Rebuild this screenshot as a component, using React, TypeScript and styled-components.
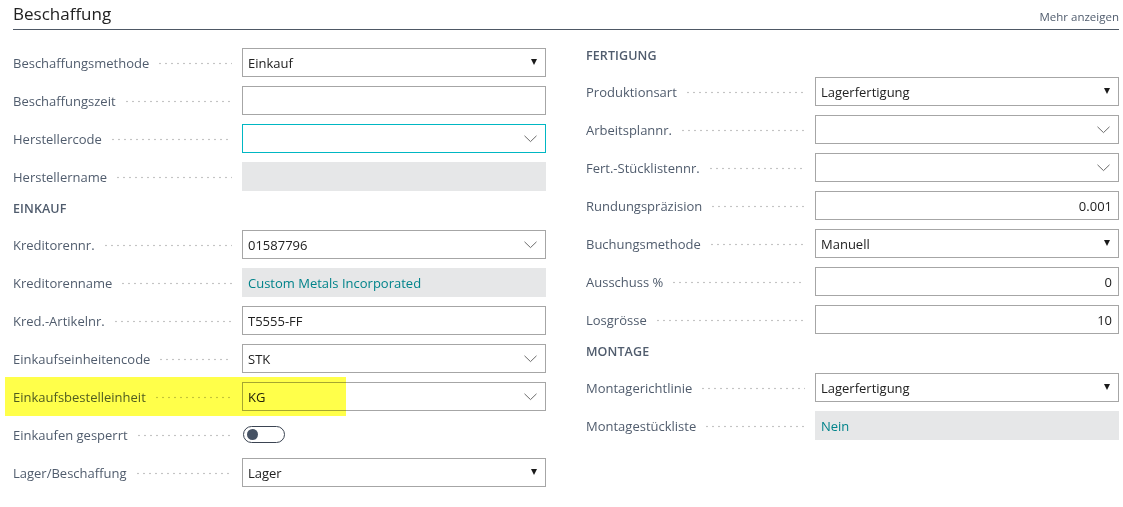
import React from "react";
import styled, { createGlobalStyle, css } from "styled-components";

const GlobalStyle = createGlobalStyle`
  body {
    margin: 0;
    background: #ffffff;
    font-family: "Open Sans", "Noto Sans", Arial, sans-serif;
    -webkit-font-smoothing: antialiased;
  }
`;

type Kind = "select" | "lookup" | "text" | "readonly" | "toggle";

interface FieldDef {
  label: string;
  kind: Kind;
  value?: string;
  align?: "left" | "right";
  focused?: boolean;
  link?: boolean;
  highlight?: boolean;
}

interface Group {
  title?: string;
  fields: FieldDef[];
}

const LEFT: Group[] = [
  {
    fields: [
      { label: "Beschaffungsmethode", kind: "select", value: "Einkauf" },
      { label: "Beschaffungszeit", kind: "text" },
      { label: "Herstellercode", kind: "lookup", focused: true },
      { label: "Herstellername", kind: "readonly" },
    ],
  },
  {
    title: "Einkauf",
    fields: [
      { label: "Kreditorennr.", kind: "lookup", value: "01587796" },
      { label: "Kreditorenname", kind: "readonly", value: "Custom Metals Incorporated", link: true },
      { label: "Kred.-Artikelnr.", kind: "text", value: "T5555-FF" },
      { label: "Einkaufseinheitencode", kind: "lookup", value: "STK" },
      { label: "Einkaufsbestelleinheit", kind: "lookup", value: "KG", highlight: true },
      { label: "Einkaufen gesperrt", kind: "toggle" },
      { label: "Lager/Beschaffung", kind: "select", value: "Lager" },
    ],
  },
];

const RIGHT: Group[] = [
  {
    title: "Fertigung",
    fields: [
      { label: "Produktionsart", kind: "select", value: "Lagerfertigung" },
      { label: "Arbeitsplannr.", kind: "lookup" },
      { label: "Fert.-Stücklistennr.", kind: "lookup" },
      { label: "Rundungspräzision", kind: "text", value: "0.001", align: "right" },
      { label: "Buchungsmethode", kind: "select", value: "Manuell" },
      { label: "Ausschuss %", kind: "text", value: "0", align: "right" },
      { label: "Losgrösse", kind: "text", value: "10", align: "right" },
    ],
  },
  {
    title: "Montage",
    fields: [
      { label: "Montagerichtlinie", kind: "select", value: "Lagerfertigung" },
      { label: "Montagestückliste", kind: "readonly", value: "Nein", link: true },
    ],
  },
];

const Chevron = () => (
  <svg width="13" height="8" viewBox="0 0 13 8">
    <polyline points="0.5,0.8 6.5,6.6 12.5,0.8" fill="none" stroke="#6b6b6b" strokeWidth="1" />
  </svg>
);

const Triangle = () => (
  <svg width="6" height="6" viewBox="0 0 6 6">
    <path d="M0 0 H6 L3 6 Z" fill="#1a1a1a" />
  </svg>
);

const FieldControl: React.FC<{ field: FieldDef }> = ({ field }) => {
  if (field.kind === "toggle") {
    return (
      <ToggleCell>
        <Toggle>
          <Knob />
        </Toggle>
      </ToggleCell>
    );
  }
  return (
    <Box $kind={field.kind} $focused={field.focused}>
      <Value $align={field.align || "left"} $link={field.link}>
        {field.value}
      </Value>
      {field.kind === "lookup" && (
        <IconSlot>
          <Chevron />
        </IconSlot>
      )}
      {field.kind === "select" && (
        <IconSlot $small>
          <Triangle />
        </IconSlot>
      )}
    </Box>
  );
};

const Column: React.FC<{ groups: Group[]; top?: number }> = ({ groups, top = 0 }) => (
  <ColumnWrap $top={top}>
    {groups.map((g, gi) => (
      <div key={gi}>
        {g.title && <GroupTitle>{g.title}</GroupTitle>}
        {g.fields.map((f) => (
          <Row key={f.label}>
            <Label>
              <LabelText>{f.label}</LabelText>
              <Leader />
            </Label>
            <FieldControl field={f} />
            {f.highlight && <Highlight />}
          </Row>
        ))}
      </div>
    ))}
  </ColumnWrap>
);

const App: React.FC = () => (
  <>
    <GlobalStyle />
    <Page>
      <Header>
        <Title>Beschaffung</Title>
        <MoreLink>Mehr anzeigen</MoreLink>
      </Header>
      <Columns>
        <Column groups={LEFT} top={1} />
        <Column groups={RIGHT} />
      </Columns>
    </Page>
  </>
);

const Page = styled.div`
  padding: 0 4px 0 13px;
`;

const Header = styled.div`
  display: flex;
  justify-content: space-between;
  align-items: flex-end;
  height: 29px;
  border-bottom: 1px solid #4e5865;
`;

const Title = styled.h1`
  margin: 0 0 4px;
  font-size: 17px;
  font-weight: 400;
  line-height: 22px;
  color: #212121;
`;

const MoreLink = styled.a`
  margin-bottom: 4px;
  font-size: 11.5px;
  line-height: 16px;
  color: #505c6d;
  cursor: pointer;
`;

const Columns = styled.div`
  display: grid;
  grid-template-columns: 533px 533px;
  column-gap: 40px;
  margin-top: 17px;
`;

const ColumnWrap = styled.div<{ $top: number }>`
  display: flex;
  flex-direction: column;
  padding-top: ${(p) => p.$top}px;
`;

const GroupTitle = styled.div`
  height: 21px;
  margin-bottom: 9px;
  font-size: 12.5px;
  line-height: 17px;
  font-weight: 600;
  text-transform: uppercase;
  color: #505c6d;
  letter-spacing: 0.1px;
`;

const Row = styled.div`
  position: relative;
  display: grid;
  grid-template-columns: 229px 304px;
  height: 29px;
  margin-bottom: 9px;
`;

const Label = styled.div`
  display: flex;
  align-items: center;
  min-width: 0;
`;

const LabelText = styled.span`
  font-size: 13px;
  color: #505c6d;
  white-space: nowrap;
`;

const Leader = styled.span`
  flex: 1;
  height: 3px;
  margin: 1px 10px 0 8px;
  background-image: radial-gradient(circle, #c4c4c4 0.75px, transparent 1.15px);
  background-size: 6px 3px;
  background-repeat: repeat-x;
  background-position: left center;
`;

const Box = styled.div<{ $kind: Kind; $focused?: boolean }>`
  display: flex;
  align-items: center;
  box-sizing: border-box;
  height: 29px;
  padding: 0 6px 0 5px;
  border: 1px solid ${(p) => (p.$focused ? "#00b7c3" : "#a6a6a6")};
  background: #ffffff;
  ${(p) =>
    p.$kind === "readonly" &&
    css`
      border-color: #e6e7e8;
      background: #e6e7e8;
    `}
`;

const Value = styled.span<{ $align: "left" | "right"; $link?: boolean }>`
  flex: 1;
  font-size: 13px;
  color: ${(p) => (p.$link ? "#00838a" : "#212121")};
  text-align: ${(p) => p.$align};
  white-space: nowrap;
`;

const IconSlot = styled.span<{ $small?: boolean }>`
  display: flex;
  align-items: center;
  margin-left: 6px;
  margin-right: ${(p) => (p.$small ? "2px" : "2px")};
  margin-top: ${(p) => (p.$small ? "-1px" : "0")};
`;

const ToggleCell = styled.div`
  display: flex;
  align-items: center;
  padding-left: 1px;
`;

const Toggle = styled.span`
  display: flex;
  align-items: center;
  box-sizing: border-box;
  width: 42px;
  height: 17px;
  padding-left: 3px;
  border: 1px solid #3b4452;
  border-radius: 9px;
`;

const Knob = styled.span`
  width: 11px;
  height: 11px;
  border-radius: 50%;
  background: #465264;
`;

const Highlight = styled.span`
  position: absolute;
  left: -8px;
  top: -5px;
  width: 341px;
  height: 39px;
  background: #ffff4a;
  mix-blend-mode: multiply;
  pointer-events: none;
`;

export default App;
